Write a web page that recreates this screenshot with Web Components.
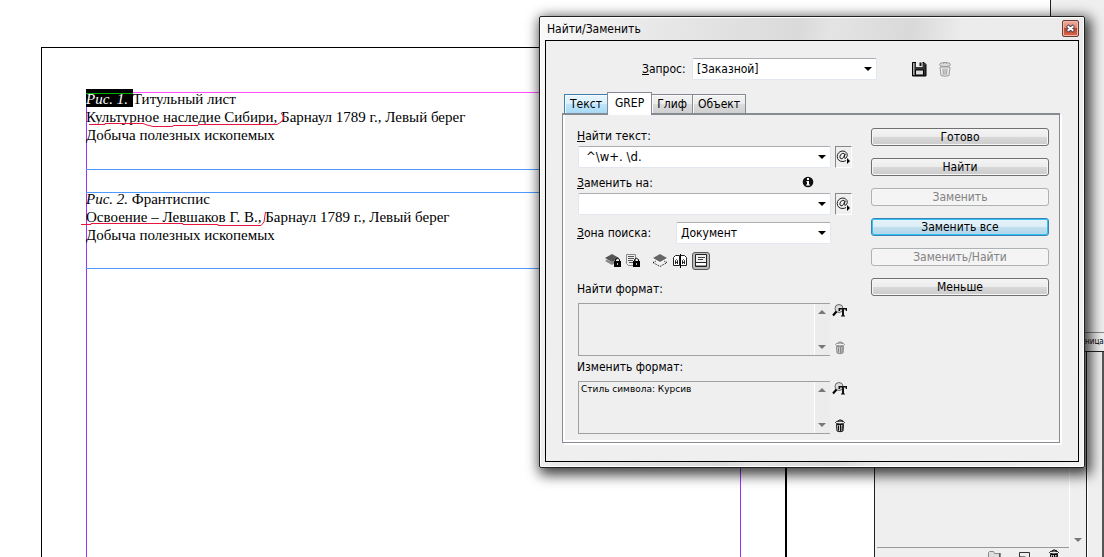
<!DOCTYPE html>
<html lang="ru">
<head>
<meta charset="utf-8">
<title>Найти/Заменить</title>
<style>
  body {
    margin: 0;
    background: #fff;
    font: 12px/18px "DejaVu Sans Condensed", "Noto Sans", sans-serif;
    color: #000;
  }
</style>
</head>
<body>
<desk-top>
  <paper-page></paper-page>
  <dock-strip slot="windows"></dock-strip>
  <style-palette slot="windows"></style-palette>
  <find-dialog slot="windows"></find-dialog>
</desk-top>

<script>
/**
 * Small helper: attaches an open shadow root with the given markup.
 */
class BaseElement extends HTMLElement {
  constructor () {
    super()
    this.attachShadow({ mode: 'open' })
  }

  connectedCallback () {
    const template = document.createElement('template')
    template.innerHTML = this.render()
    this.shadowRoot.replaceChildren(template.content.cloneNode(true))
  }
}

const icons = {
  save: `
    <path d="M1.5 1.5H13L15 3.5V15H1.5Z" fill="#333" stroke="#000"/>
    <path d="M2 2H3.5V14H2Z" fill="#aaa"/>
    <path d="M5 1H11.5V6H5Z" fill="#eee"/>
    <path d="M8.5 1.5H10.5V5H8.5Z" fill="#111"/>
    <path d="M4.5 9H12.5V14H4.5Z" fill="#ddd" stroke="#000"/>`,
  trash: `
    <ellipse cx="8" cy="3.5" rx="5.5" ry="2" fill="#ddd" stroke="currentColor"/>
    <path d="M6 2.5Q8 .2 10 2.5" fill="none" stroke="currentColor"/>
    <path d="M3 6H13L12 14.5Q8 16 4 14.5Z" fill="#eee" stroke="currentColor"/>
    <path d="M6 7.5L6.4 13.5M8 7.5V14M10 7.5L9.6 13.5" stroke="currentColor" fill="none"/>`,
  'trash-small': `
    <ellipse cx="8" cy="4.5" rx="4.5" ry="1.5" fill="#eee" stroke="currentColor"/>
    <path d="M6 3L8 1.8L11 3" fill="none" stroke="currentColor"/>
    <path d="M4.500 6.5H11.500L11 13Q8 14.5 5 13Z" fill="#ccc" stroke="currentColor"/>
    <path d="M6.5 7.5V12.5M8.5 7V13M10.3 7.5L10 12.5" stroke="currentColor" fill="none"/>`,
  'layers-lock': `
    <path d="M0 5L7 1L14 5L7 9Z" fill="#555"/>
    <path d="M0 8L7 12L10 10V7L7 9L2 6.5Z" fill="#888"/>
    <path d="M9 8H16V14H9Z" fill="#000"/>
    <path d="M10.5 8V6.5Q12.5 4 14.5 6.5V8" fill="none" stroke="#000"/>
    <path d="M12 10H13V12H12Z" fill="#bbb"/>`,
  'page-lock': `
    <path d="M1.5 1.5H10.5V12.500H3.5L1.5 10.500Z" fill="#eee" stroke="#888"/>
    <path d="M3 3.500H9M3 5.5H9M3 7.5H8M4 9.5H8" stroke="#555"/>
    <path d="M8 8H15V14H8Z" fill="#000"/>
    <path d="M9.5 8V6.5Q11.5 4 13.5 6.5V8" fill="none" stroke="#000"/>
    <path d="M11 10H12V12H11Z" fill="#bbb"/>`,
  layers: `
    <path d="M1 5L8 1L15 5L8 9Z" fill="#666"/>
    <path d="M1 6L8 10L15 6" fill="none" stroke="#fff"/>
    <path d="M1 9.5L8 13.5L15 9.5M1 9.5L4 8M15 9.5L12 8" fill="none" stroke="#000" stroke-dasharray="1 1"/>`,
  spread: `
    <path d="M1.5 4.5L3.5 2.5H7.5V12.5H1.5ZM8.5 2.5H12.5L14.5 4.5V12.5H8.5Z" fill="#fff" stroke="#222"/>
    <path d="M8.5 1V15" stroke="#000"/>
    <path d="M3.5 11V7.5L4.5 6.5L5.5 7.5V11M3.5 9.5H5.5M10.5 11V7.5L11.5 6.5L12.5 7.5V11M10.5 9.5H12.5" fill="none" stroke="#222"/>`,
  footnote: `
    <path d="M2.5 1.5H13.5V13.5H2.5Z" fill="#eee" stroke="#222"/>
    <path d="M5 4.5H12M5 6.5H10" stroke="#444"/>
    <path d="M3 9H13V13H3Z" fill="#fff"/>
    <path d="M3 9.5H13" stroke="#222"/>
    <path d="M3 12.500H13" stroke="#999"/>`,
  'find-format': `
    <circle cx="7" cy="5.5" r="4" fill="#ddd" stroke="#666"/>
    <path d="M4.5 8.5L1 12.5" stroke="#000" stroke-width="2"/>
    <path d="M6.5 5H15V8H13.8L13.5 6.5H12V12.5H13V13.5H9V12.5H10V6.5H8.2L8 8H6.5Z" fill="#111"/>`,
  at: `
    <path d="M9 5.5Q8.3 4.2 6.8 4.3Q4 5 3.8 8Q4 10 6 9.8Q8 9 9 4.8L8.3 8.5Q8.5 10 10 9Q12 7 11 4.5Q9.5 1.5 6 2Q1.500 3 1.2 7.5Q1.5 12.5 7 12.5Q9 12.3 10 11.5" fill="none" stroke="#222"/>
    <path d="M11 9L14 12L11 15Z" fill="#000"/>`,
  info: `
    <circle cx="8" cy="8" r="5.3" fill="#111"/>
    <path d="M7 4H9V6H7ZM6.5 7H9V10.5H10V11.5H6V10.5H7V8H6.5Z" fill="#fff"/>`,
  folder: `
    <path d="M2.5 14.5V4.5L3.5 3.5H7.5L8.5 5.5H13.5V14.5Z" fill="#ddd" stroke="#888"/>
    <path d="M14 5V15" stroke="#222"/>`,
  'new-item': `
    <path d="M3.5 4.5H13.5V15.5H3.5Z" fill="#eee" stroke="#333"/>
    <path d="M4 9.5H8.5V15" fill="none" stroke="#111" stroke-width="2"/>`,
  down: '<path d="M4 6H12L8 10Z" fill="currentColor"/>',
  up: '<path d="M4 10H12L8 6Z" fill="currentColor"/>',
  close: `
    <path d="M4.500 5L11.500 11M11.500 5L4.500 11" stroke="#445" stroke-width="4"/>
    <path d="M5 5.500L11 10.500M11 5.500L5 10.500" stroke="#fff" stroke-width="2"/>`
}

/**
 * 16px icon, picked by the name attribute.
 */
class GlyphIcon extends BaseElement {
  render () {
    return `
      <style>
        :host { display: block; width: 16px; height: 16px; }
        svg { display: block; width: 100%; height: 100%; }
      </style>
      <svg viewBox="0 0 16 16" aria-hidden="true">${icons[this.getAttribute('name')]}</svg>`
  }
}
customElements.define('glyph-icon', GlyphIcon)

/**
 * Flat button that holds one icon.
 */
class IconButton extends BaseElement {
  render () {
    return `
      <style>
        :host { display: block; }
        button {
          display: block;
          padding: 0;
          border: 0;
          background: none;
          color: inherit;
        }
        :host([pressed]) button {
          border: 1px solid #555;
          border-radius: 3px;
          background: #bbb;
        }
      </style>
      <button type="button" aria-label="${this.getAttribute('label')}">
        <glyph-icon name="${this.getAttribute('icon')}"></glyph-icon>
      </button>`
  }
}
customElements.define('icon-button', IconButton)

/**
 * Push button. Attributes: primary, disabled.
 */
class PushButton extends BaseElement {
  render () {
    return `
      <style>
        :host { display: block; }
        button {
          display: block;
          box-sizing: border-box;
          width: 100%;
          height: 18px;
          padding: 0;
          border: 1px solid #707070;
          border-radius: 3px;
          background: linear-gradient(#f4f4f4, #ececec 50%, #d8d8d8 51%, #cccccc);
          box-shadow: inset 0 0 0 1px #f6f6f6;
          font: inherit;
          line-height: 16px;
          color: #000;
        }
        button:disabled {
          border-color: #adb2b5;
          background: #f4f4f4;
          color: #838383;
        }
        :host([primary]) button {
          border-color: #3c7fb1;
          background: linear-gradient(#e6f3fa, #dcedf6 50%, #c0dfee 51%, #b2d5e8);
          box-shadow: inset 0 0 0 1px #2fc4f5;
        }
      </style>
      <button type="button" ${this.hasAttribute('disabled') ? 'disabled' : ''}><slot></slot></button>`
  }
}
customElements.define('push-button', PushButton)

const fieldStyle = `
  :host { display: block; }
  label { display: block; white-space: nowrap; margin-left: -1px; }
  u { text-underline-offset: 2px; }
  .box {
    display: flex;
    flex: 1;
    min-width: 0;
    box-sizing: border-box;
    height: 22px;
    border: 1px solid #e2e7ef;
    border-top-color: #abadb3;
    border-radius: 2px;
    background: #fff;
  }
  .box > * { grid-area: 1 / 1; }
  input, select {
    flex: 1;
    min-width: 0;
    padding: 0 0 0 7px;
    border: 0;
    outline: 0;
    background: none;
    appearance: none;
    font: inherit;
    color: inherit;
  }
  input { font-size: 13px; }
  select { padding: 0 20px 0 4px; }
`

/**
 * Text box with a history arrow and a special-characters button.
 */
class TextField extends BaseElement {
  render () {
    return `
      <style>
        ${fieldStyle}
        .head { display: flex; justify-content: space-between; margin-bottom: 1px; }
        .info { width: 52px; }
        .row { display: flex; gap: 4px; }
        .history { align-self: center; }
        .special {
          box-sizing: border-box;
          width: 17px;
          height: 22px;
          border: 1px solid #fff;
          border-top-color: #888;
          border-left-color: #888;
          padding-top: 2px;
          overflow: hidden;
        }
      </style>
      <div class="head">
        <label for="text"><slot></slot></label>
        ${this.hasAttribute('info') ? '<icon-button class="info" icon="info" label="Справка"></icon-button>' : ''}
      </div>
      <div class="row">
        <div class="box">
          <input id="text" type="text" spellcheck="false">
          <icon-button class="history" icon="down" label="Журнал"></icon-button>
        </div>
        <icon-button class="special" icon="at" label="Специальные символы"></icon-button>
      </div>`
  }

  connectedCallback () {
    super.connectedCallback()
    this.shadowRoot.querySelector('input').value = this.getAttribute('value') || ''
  }
}
customElements.define('text-field', TextField)

/**
 * Label and drop-down on one line.
 */
class ChoiceField extends BaseElement {
  render () {
    return `
      <style>
        ${fieldStyle}
        .row { display: flex; align-items: center; }
        label { width: var(--label-width, 99px); }
        .box { display: grid; }
        glyph-icon { justify-self: end; align-self: center; pointer-events: none; }
      </style>
      <div class="row">
        <label for="choice"><slot></slot></label>
        <div class="box">
          <select id="choice"><option>${this.getAttribute('value')}</option></select>
          <glyph-icon name="down"></glyph-icon>
        </div>
      </div>`
  }
}
customElements.define('choice-field', ChoiceField)

/**
 * Read-only list of format settings with its scroll bar and two buttons.
 */
class FormatField extends BaseElement {
  render () {
    return `
      <style>
        ${fieldStyle}
        .row { display: flex; height: 53px; margin-top: 5px; }
        .list {
          flex: 1;
          display: flex;
          min-width: 0;
          box-sizing: border-box;
          border: 1px solid #a0a0a0;
          border-right: 0;
        }
        textarea {
          flex: 1;
          min-width: 0;
          box-sizing: border-box;
          padding: 1px 2px;
          border: 0;
          outline: 0;
          resize: none;
          overflow: hidden;
          background: none;
          font: 9px/12px "DejaVu Sans", sans-serif;
          color: #000;
        }
        .scroll, .tools {
          display: flex;
          flex-direction: column;
          justify-content: space-between;
        }
        .scroll {
          width: 16px;
          background: #ececec;
          box-shadow: inset 1px 0 #fff;
          color: #777;
        }
        .tools { width: 20px; margin-left: 2px; }
      </style>
      <label for="list"><slot></slot></label>
      <div class="row">
        <div class="list">
          <textarea id="list" readonly>${this.getAttribute('value') || ''}</textarea>
          <div class="scroll">
            <icon-button icon="up" label="Вверх"></icon-button>
            <icon-button icon="down" label="Вниз"></icon-button>
          </div>
        </div>
        <div class="tools">
          <icon-button icon="find-format" label="Задать атрибуты"></icon-button>
          <icon-button icon="trash-small" label="Очистить" style="color: ${this.hasAttribute('value') ? '#111' : '#888'}"></icon-button>
        </div>
      </div>`
  }
}
customElements.define('format-field', FormatField)

/**
 * Row of tabs joined to the panel under it.
 */
class TabPanel extends BaseElement {
  render () {
    const active = this.getAttribute('active')
    const tabs = this.getAttribute('tabs').split(',').map(name => `
      <button type="button" role="tab" aria-selected="${name === active}">${name}</button>`)
    return `
      <style>
        :host { display: block; }
        .tabs {
          display: flex;
          align-items: flex-end;
          height: 21px;
          padding-left: 2px;
        }
        button {
          box-sizing: border-box;
          height: 19px;
          padding: 0 5px;
          border: 1px solid #868a93;
          border-bottom: 0;
          margin-right: -1px;
          background: linear-gradient(#f2f2f2, #ebebeb 50%, #dcdcdc 51%, #d0d0d0);
          box-shadow: inset 1px 1px #fafafa;
          font: inherit;
          color: #000;
        }
        button:first-child {
          border-color: #3c7fb1;
          background: linear-gradient(#e8f5fc, #d8f0fc 50%, #bee6fd 51%, #a7d9f5);
        }
        button[aria-selected="true"] {
          position: relative;
          height: 23px;
          margin-bottom: -2px;
          padding: 0 7px 3px;
          background: #fff;
        }
        .panel {
          border: 1px solid #868a93;
          border-top: 2px solid #868a93;
          box-shadow: 2px 2px #fff, inset 2px -2px #fff;
          padding: 12px 10px 8px 15px;
        }
      </style>
      <div class="tabs" role="tablist">${tabs.join('')}</div>
      <div class="panel" role="tabpanel"><slot></slot></div>`
  }
}
customElements.define('tab-panel', TabPanel)

/**
 * The Find/Change window.
 */
class FindDialog extends BaseElement {
  render () {
    return `
      <style>
        :host {
          position: absolute;
          top: 16px;
          right: 19px;
          box-sizing: border-box;
          width: 546px;
          max-width: 100%;
          padding: 0 5px 5px;
          border: 1px solid #222;
          border-radius: 2px;
          background: linear-gradient(100deg, #fafafa, #e9e9e9 17%, #dadada 42%, #e4e4e4 47%, #d9d9d9 60%, #ececec 68%, #ebebeb 88%, #f4f4f4);
          box-shadow: inset 0 0 0 1px #fff, 3px 4px 13px 3px rgba(0, 0, 0, .75);
        }
        header {
          display: flex;
          align-items: center;
          justify-content: space-between;
          height: 23px;
          padding-left: 2px;
        }
        h1 { margin: 0; font: inherit; }
        .close {
          box-sizing: border-box;
          width: 17px;
          height: 17px;
          padding: 0;
          border: 1px solid #6b3b35;
          border-radius: 2px;
          background: linear-gradient(#efac9f, #e08570 48%, #c2432a 50%, #d96a4c);
          box-shadow: inset 0 0 0 1px #f3b7aa;
        }
        .close glyph-icon { width: 15px; height: 15px; }
        .body {
          padding: 17px 18px 18px 16px;
          border: 1px solid #000;
          background: #efefef;
        }
        .query { display: flex; align-items: center; margin-bottom: 12px; }
        .query choice-field { width: 234px; margin: 0 34px 0 81px; --label-width: 50px; }
        .query icon-button + icon-button { margin-left: 10px; color: #999; }
        .columns { display: grid; grid-template-columns: 1fr 178px; gap: 19px; }
        .actions { display: flex; flex-direction: column; gap: 12px; padding-top: 1px; }
        .second { margin-top: 6px; }
        .zone { width: 253px; margin-top: 7px; }
        .scope { display: flex; align-items: center; height: 18px; gap: 4px; margin: 8px 0 10px 27px; }
        .scope :nth-child(3) { margin-left: 7px; }
        .change { margin-top: 2px; }
      </style>
      <header>
        <h1>Найти/Заменить</h1>
        <button class="close" type="button" aria-label="Закрыть"><glyph-icon name="close"></glyph-icon></button>
      </header>
      <div class="body">
        <div class="query">
          <choice-field value="[Заказной]"><u>З</u>апрос:</choice-field>
          <icon-button icon="save" label="Сохранить запрос"></icon-button>
          <icon-button icon="trash" label="Удалить запрос"></icon-button>
        </div>
        <tab-panel tabs="Текст,GREP,Глиф,Объект" active="GREP">
          <div class="columns">
            <div>
              <text-field value="^\\w+. \\d."><u>Н</u>айти текст:</text-field>
              <text-field class="second" info><u>З</u>аменить на:</text-field>
              <choice-field class="zone" value="Документ"><u>З</u>она поиска:</choice-field>
              <div class="scope">
                <icon-button icon="layers-lock" label="Заблокированные слои"></icon-button>
                <icon-button icon="page-lock" label="Заблокированные материалы"></icon-button>
                <icon-button icon="layers" label="Скрытые слои"></icon-button>
                <icon-button icon="spread" label="Страницы-шаблоны"></icon-button>
                <icon-button icon="footnote" label="Сноски" pressed></icon-button>
              </div>
              <format-field>Найти формат:</format-field>
              <format-field class="change" value="Стиль символа: Курсив">Изменить формат:</format-field>
            </div>
            <div class="actions">
              <push-button>Готово</push-button>
              <push-button>Найти</push-button>
              <push-button disabled>Заменить</push-button>
              <push-button primary>Заменить все</push-button>
              <push-button disabled>Заменить/Найти</push-button>
              <push-button>Меньше</push-button>
            </div>
          </div>
        </tab-panel>
      </div>`
  }
}
customElements.define('find-dialog', FindDialog)

/**
 * Document page with margins, two text frames and pen marks over the text.
 */
class PaperPage extends BaseElement {
  render () {
    return `
      <style>
        :host {
          display: block;
          box-sizing: border-box;
          width: 746px;
          min-height: calc(100vh - 47px);
          margin: 47px 0 0 41px;
          padding: 44px 44px 0 44px;
          border: solid #000;
          border-width: 1px 2px 0 1px;
          font: 15px/18px "Liberation Serif", serif;
        }
        .margins {
          position: relative;
          box-sizing: border-box;
          min-height: calc(100vh - 92px);
          border: 1px solid #9933ff;
          border-top-color: #ff4fff;
          border-bottom: 0;
        }
        .frame {
          box-sizing: border-box;
          height: 77px;
          border-bottom: 1px solid #4f99ff;
          margin: 0 0 22px -1px;
        }
        .frame + .frame { border-top: 1px solid #4f99ff; }
        .text { margin-top: -3px; }
        p { margin: 0; white-space: nowrap; }
        mark {
          padding: 2px 1px 0 0;
          background: linear-gradient(#00b000, #00b000) 0 4px / 100% 1px no-repeat, #000;
          color: #fff;
        }
        .frame { display: flow-root; }
        svg { position: absolute; left: -6px; top: 0; overflow: visible; }
      </style>
      <div class="margins">
        <div class="frame">
          <div class="text">
            <p><mark><em>Рис. 1.</em>&nbsp;</mark>Титульный лист</p>
            <p>Культурное наследие Сибири, Барнаул 1789 г., Левый берег</p>
            <p>Добыча полезных ископемых</p>
          </div>
        </div>
        <div class="frame">
          <div class="text">
            <p><em>Рис. 2.</em> Франтиспис</p>
            <p>Освоение – Левшаков Г. В., Барнаул 1789 г., Левый берег</p>
            <p>Добыча полезных ископемых</p>
          </div>
        </div>
        <svg width="200" height="150" viewBox="81 93 200 150" fill="none" stroke="#e8143c" aria-hidden="true">
          <path d="M89 124.5H105V123.5H143L147 125L153 126.5H172L174 125.5H198L199 124.5H277L281 122L283.500 119V116L281 113"/>
          <path d="M81 224.5H91V223.5H183V224.5H218V225.5H261L264 222L265.500 212"/>
        </svg>
      </div>`
  }
}
customElements.define('paper-page', PaperPage)

/**
 * Collapsed dock at the right edge of the screen.
 */
class DockStrip extends BaseElement {
  render () {
    return `
      <style>
        :host {
          position: absolute;
          inset: 0 0 0 auto;
          display: flex;
          flex-direction: column;
          align-items: flex-end;
          width: 54px;
        }
        .top {
          align-self: stretch;
          box-sizing: border-box;
          height: 332px;
          border-left: 1px solid #222;
          background: #efefef;
        }
        .tab {
          box-sizing: border-box;
          min-width: 19px;
          height: 20px;
          border: solid #888;
          border-width: 1px 0;
          border-bottom-color: #222;
          background: #f0f0f0;
          font-size: 8px;
        }
        .rail {
          flex: 1;
          box-sizing: border-box;
          width: 17px;
          border-left: 1px solid #fff;
          border-right: 2px solid #555;
          background: #efefef;
        }
      </style>
      <div class="top"></div>
      <div class="tab">ница</div>
      <div class="rail"></div>`
  }
}
customElements.define('dock-strip', DockStrip)

/**
 * Palette under the dialog: an empty list with its tool row.
 */
class StylePalette extends BaseElement {
  render () {
    return `
      <style>
        :host {
          position: absolute;
          top: 352px;
          right: 17px;
          bottom: 0;
          display: flex;
          flex-direction: column;
          box-sizing: border-box;
          width: 213px;
          border: solid #222;
          border-width: 0 1px;
          background: #efefef;
          overflow: hidden;
        }
        .list { flex: 1; display: flex; padding-left: 2px; }
        .items { flex: 1; border-bottom: 1px solid #999; }
        .scroll {
          display: flex;
          align-items: flex-end;
          width: 16px;
          border-left: 1px solid #fff;
          color: #777;
        }
        .tools {
          display: flex;
          gap: 14px;
          justify-content: flex-end;
          height: 9px;
          padding-right: 24px;
          overflow: hidden;
        }
      </style>
      <div class="list">
        <div class="items"></div>
        <div class="scroll"><icon-button icon="down" label="Вниз"></icon-button></div>
      </div>
      <div class="tools">
        <icon-button icon="folder" label="Новая группа"></icon-button>
        <icon-button icon="new-item" label="Новый стиль"></icon-button>
        <icon-button icon="trash-small" label="Удалить стиль"></icon-button>
      </div>`
  }
}
customElements.define('style-palette', StylePalette)

/**
 * Desktop: the document in the flow, windows floating over it.
 */
class DeskTop extends BaseElement {
  render () {
    return `
      <style>
        :host {
          display: flow-root;
          position: relative;
          min-height: 100vh;
          overflow: hidden;
          background: #fff;
        }
      </style>
      <slot></slot>
      <slot name="windows"></slot>`
  }
}
customElements.define('desk-top', DeskTop)
</script>
</body>
</html>
